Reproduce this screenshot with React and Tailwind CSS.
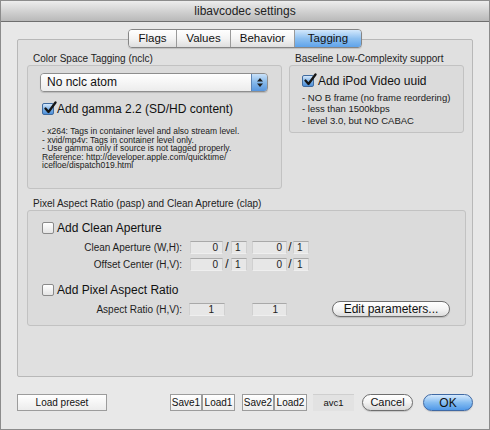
import React from 'react';

function CheckBox({ checked }) {
  if (checked) {
    return (
      <span className="relative inline-block w-[12px] h-[12px] shrink-0 rounded-[2px] border border-[#3f6a9e] bg-gradient-to-b from-[#d6e8fa] via-[#82b5e8] to-[#4c8ed8]">
        <svg className="absolute -top-[3px] left-[0px]" width="14" height="14" viewBox="0 0 14 14">
          <path d="M2.5 7.5 L5.5 11 L12.5 1.5" fill="none" stroke="#151515" strokeWidth="2.3" strokeLinecap="round" strokeLinejoin="round" />
        </svg>
      </span>
    );
  }
  return (
    <span className="inline-block w-[12px] h-[12px] shrink-0 rounded-[2px] border border-[#8a8a8a] bg-gradient-to-b from-white to-[#e4e4e4]" />
  );
}

function Field({ value, className }) {
  return (
    <div className={'h-[13px] bg-[#e7e7e7] border-t border-t-[#a9a9a9] border-x border-x-[#d0d0d0] border-b border-b-[#efefef] text-[10px] leading-[12px] text-[#222] ' + className}>
      {value}
    </div>
  );
}

function FractionRow({ label }) {
  return (
    <div className="flex items-center h-[13px]">
      <div className="w-[140px] text-right text-[10px] text-[#1e1e1e]">{label}</div>
      <Field value="0" className="ml-[8px] w-[33px] text-right pr-[4px]" />
      <div className="w-[8px] text-center text-[12px] leading-[13px]">/</div>
      <Field value="1" className="w-[16px] pl-[3px]" />
      <Field value="0" className="ml-[5px] w-[35px] text-right pr-[4px]" />
      <div className="w-[6px] text-center text-[12px] leading-[13px]">/</div>
      <Field value="1" className="w-[16px] pl-[3px]" />
    </div>
  );
}

function SquareButton({ children, className }) {
  return (
    <div className={'h-[17px] flex items-center justify-center border border-[#9c9c9c] bg-gradient-to-b from-white to-[#ececec] text-[10px] text-[#111] ' + className}>
      {children}
    </div>
  );
}

export default function App() {
  const tabs = [
    { name: 'Flags', w: 'w-[48px]' },
    { name: 'Values', w: 'w-[54px]' },
    { name: 'Behavior', w: 'w-[64px]' },
  ];

  return (
    <div className="w-[490px] h-[430px] overflow-hidden bg-[#e8e8e8] border border-[#8c8c8c] font-['Liberation_Sans',Arial,sans-serif] text-[#111]">
      {/* title bar */}
      <div className="h-[21px] flex items-center justify-center bg-gradient-to-b from-[#ededed] to-[#b9b9b9] border-b border-[#6f6f6f] text-[12px] text-[#222]">
        libavcodec settings
      </div>

      <div className="pt-[7px] px-[16px]">
        {/* tabs */}
        <div className="relative z-10 flex justify-center">
          <div className="flex h-[19px] rounded-[4px] border border-[#858585] overflow-hidden shadow-[0_1px_1px_rgba(0,0,0,0.15)]">
            {tabs.map((t) => (
              <div key={t.name} className={t.w + ' flex items-center justify-center border-r border-[#9a9a9a] bg-gradient-to-b from-white via-[#f4f4f4] to-[#dedede] text-[11.5px]'}>
                {t.name}
              </div>
            ))}
            <div className="w-[66px] flex items-center justify-center bg-gradient-to-b from-[#d3e8fc] via-[#8ec0f0] to-[#5ea3ea] text-[11.5px]">
              Tagging
            </div>
          </div>
        </div>

        {/* tab panel */}
        <div className="-mt-[9px] h-[338px] bg-[#e0e0e0] border border-[#b8b8b8] rounded-[2px] pt-[12px] pl-[9px]">
          <div className="flex gap-[7px]">
            <div className="w-[255px]">
              <div className="h-[13px] pl-[6px] text-[10px] leading-[13px] text-[#222]">Color Space Tagging (nclc)</div>
              <div className="h-[124px] bg-[#dbdbdb] border border-[#c2c2c2] rounded-[3px] pt-[7px] pl-[12px]">
                <div className="w-[228px] h-[19px] flex rounded-[4px] border border-[#8e8e8e] overflow-hidden shadow-[0_1px_1px_rgba(0,0,0,0.15)]">
                  <div className="flex-1 bg-gradient-to-b from-white to-[#ececec] text-[12px] leading-[17px] pl-[6px]">No nclc atom</div>
                  <div className="w-[16px] border-l border-[#5c84b4] bg-gradient-to-b from-[#c9e1f8] via-[#85b8ea] to-[#5896de] flex items-center justify-center">
                    <svg width="8" height="11" viewBox="0 0 8 11">
                      <path d="M1 4.5 L4 1 L7 4.5 Z" fill="#1c1c1c" />
                      <path d="M1 6.5 L4 10 L7 6.5 Z" fill="#1c1c1c" />
                    </svg>
                  </div>
                </div>
                <div className="mt-[10px] h-[14px] flex items-center gap-[3px] pl-[2px]">
                  <CheckBox checked />
                  <span className="text-[12px] leading-[14px]">Add gamma 2.2 (SD/HD content)</span>
                </div>
                <div className="mt-[11px] pl-[2px] text-[8.5px] leading-[8.5px] text-[#1a1a1a]">
                  <div>- x264: Tags in container level and also stream level.</div>
                  <div>- xvid/mp4v: Tags in container level only.</div>
                  <div>- Use gamma only if source is not tagged properly.</div>
                  <div>Reference: http://developer.apple.com/quicktime/</div>
                  <div>icefloe/dispatch019.html</div>
                </div>
              </div>
            </div>

            <div className="w-[175px]">
              <div className="h-[13px] pl-[6px] text-[10px] leading-[13px] text-[#222]">Baseline Low-Complexity support</div>
              <div className="h-[68px] bg-[#dbdbdb] border border-[#c2c2c2] rounded-[3px] pt-[8px] pl-[12px]">
                <div className="h-[14px] flex items-center gap-[4px]">
                  <CheckBox checked />
                  <span className="text-[12px] leading-[14px]">Add iPod Video uuid</span>
                </div>
                <div className="mt-[4px] text-[9.5px] leading-[11.3px] text-[#1a1a1a]">
                  <div>- NO B frame (no frame reordering)</div>
                  <div>- less than 1500kbps</div>
                  <div>- level 3.0, but NO CABAC</div>
                </div>
              </div>
            </div>
          </div>

          <div className="mt-[9px] w-[439px]">
            <div className="h-[12px] pl-[6px] text-[10px] leading-[12px] text-[#222]">Pixel Aspect Ratio (pasp) and Clean Apreture (clap)</div>
            <div className="h-[116px] bg-[#dbdbdb] border border-[#c2c2c2] rounded-[3px] pt-[10px] pl-[14px]">
              <div className="h-[14px] flex items-center gap-[3px]">
                <CheckBox />
                <span className="text-[12px] leading-[14px]">Add Clean Aperture</span>
              </div>
              <div className="mt-[6px]">
                <FractionRow label="Clean Aperture (W,H):" />
              </div>
              <div className="mt-[4px]">
                <FractionRow label="Offset Center (H,V):" />
              </div>
              <div className="mt-[12px] h-[14px] flex items-center gap-[3px]">
                <CheckBox />
                <span className="text-[12px] leading-[14px]">Add Pixel Aspect Ratio</span>
              </div>
              <div className="mt-[4px] flex items-center h-[16px]">
                <div className="w-[140px] text-right text-[10px] text-[#1e1e1e]">Aspect Ratio (H,V):</div>
                <Field value="1" className="ml-[7px] w-[36px] text-right pr-[10px]" />
                <Field value="1" className="ml-[27px] w-[35px] text-right pr-[8px]" />
                <div className="ml-[45px] w-[118px] h-[16px] rounded-full border border-[#6f6f6f] bg-gradient-to-b from-white via-[#f5f5f5] to-[#dcdcdc] flex items-center justify-center text-[12px] shadow-[0_1px_1px_rgba(0,0,0,0.15)]">
                  Edit parameters...
                </div>
              </div>
            </div>
          </div>
        </div>

        {/* bottom buttons */}
        <div className="mt-[17px] flex items-center justify-between">
          <SquareButton className="w-[90px]">Load preset</SquareButton>
          <div className="flex items-center">
            <SquareButton className="w-[32px]">Save1</SquareButton>
            <SquareButton className="w-[33px]">Load1</SquareButton>
            <SquareButton className="ml-[7px] w-[32px]">Save2</SquareButton>
            <SquareButton className="w-[33px]">Load2</SquareButton>
            <div className="ml-[6px] w-[41px] h-[17px] flex items-center justify-center bg-[#e2e2e2] border-t border-[#cfcfcf] text-[9.5px]">avc1</div>
            <div className="ml-[8px] w-[51px] h-[17px] rounded-full border border-[#6e6e6e] bg-gradient-to-b from-white via-[#f3f3f3] to-[#d8d8d8] flex items-center justify-center text-[11px] shadow-[0_1px_1px_rgba(0,0,0,0.15)]">Cancel</div>
            <div className="ml-[10px] w-[50px] h-[17px] rounded-full border border-[#3f69a4] bg-gradient-to-b from-[#d5e9fd] via-[#86bdf1] to-[#4f98e8] flex items-center justify-center text-[12px] shadow-[0_1px_1px_rgba(0,0,0,0.15)]">OK</div>
          </div>
        </div>
      </div>
    </div>
  );
}
